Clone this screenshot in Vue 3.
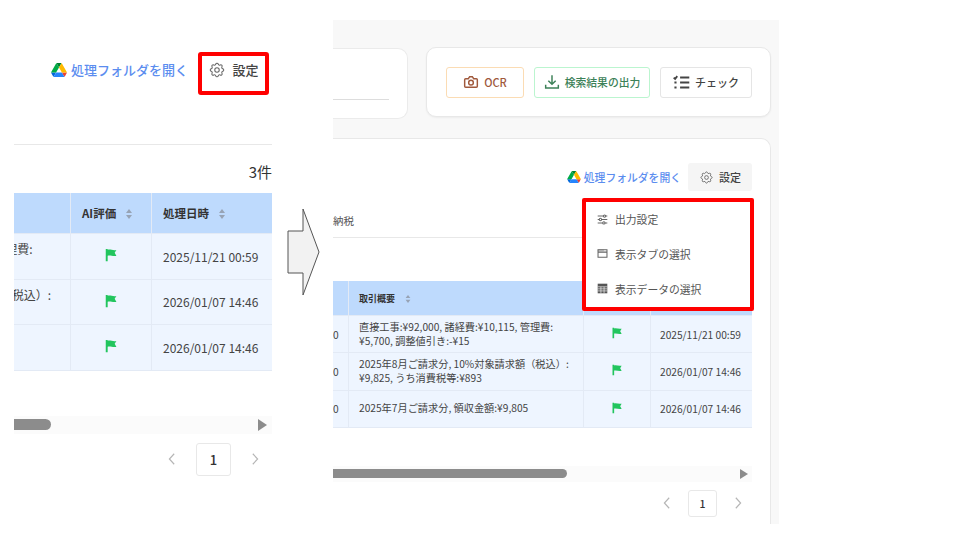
<script setup>
const driveParts = [
  { d: 'm6.6 66.85 3.85 6.65c.8 1.4 1.95 2.5 3.3 3.3l13.75-23.8h-27.5c0 1.55.4 3.1 1.2 4.5z', fill: '#0066da' },
  { d: 'm43.65 25-13.75-23.8c-1.35.8-2.5 1.9-3.3 3.3l-25.4 44a9.06 9.06 0 0 0 -1.2 4.5h27.5z', fill: '#00ac47' },
  { d: 'm73.55 76.8c1.35-.8 2.5-1.9 3.3-3.3l1.6-2.75 7.65-13.25c.8-1.4 1.2-2.95 1.2-4.5h-27.502l5.852 11.5z', fill: '#ea4335' },
  { d: 'm43.65 25 13.75-23.8c-1.35-.8-2.9-1.2-4.5-1.2h-18.5c-1.6 0-3.15.45-4.5 1.2z', fill: '#00832d' },
  { d: 'm59.8 53h-32.3l-13.75 23.8c1.35.8 2.9 1.2 4.5 1.2h50.8c1.6 0 3.15-.45 4.5-1.2z', fill: '#2684fc' },
  { d: 'm73.4 26.5-12.7-22c-.8-1.4-1.95-2.5-3.3-3.3l-13.75 23.8 16.15 28h27.45c0-1.55-.4-3.1-1.2-4.5z', fill: '#ffba00' }
]

const gear = 'M10.325 4.317c.426-1.756 2.924-1.756 3.35 0a1.724 1.724 0 0 0 2.573 1.066c1.543-.94 3.31.826 2.37 2.37a1.724 1.724 0 0 0 1.065 2.572c1.756.426 1.756 2.924 0 3.35a1.724 1.724 0 0 0-1.066 2.573c.94 1.543-.826 3.31-2.37 2.37a1.724 1.724 0 0 0-2.572 1.065c-.426 1.756-2.924 1.756-3.35 0a1.724 1.724 0 0 0-2.573-1.066c-1.543.94-3.31-.826-2.37-2.37a1.724 1.724 0 0 0-1.065-2.572c-1.756-.426-1.756-2.924 0-3.35a1.724 1.724 0 0 0 1.066-2.573c-.94-1.543.826-3.31 2.37-2.37c1 .608 2.296.07 2.572-1.065z'
const flag = 'M2 1h2.200v1c3-1 6 1.200 10 .2l-2 3.300 2 3.500c-4 1-7-1.200-10-.2V15H2z'

const rows = [
  { amount: '0', lines: ['直接工事:¥92,000, 諸経費:¥10,115, 管理費:', '¥5,700, 調整値引き:-¥15'], date: '2025/11/21 00:59' },
  { amount: '0', lines: ['2025年8月ご請求分, 10%対象請求額（税込）:', '¥9,825, うち消費税等:¥893'], date: '2026/01/07 14:46' },
  { amount: '0', lines: ['2025年7月ご請求分, 領収金額:¥9,805'], date: '2026/01/07 14:46' }
]
</script>

<template>
  <div class="canvas">
    <!-- 左: 設定ボタンの拡大 -->
    <section class="zoomed">
      <div class="zoomed-tools">
        <a class="drive-link">
          <svg class="drive" viewBox="0 0 87.3 78"><path v-for="p in driveParts" :key="p.fill" :d="p.d" :fill="p.fill" /></svg>
          処理フォルダを開く
        </a>
        <div class="zoomed-setting">
          <svg class="gear" viewBox="0 0 24 24"><path :d="gear" /><circle cx="12" cy="12" r="3" /></svg>
          設定
        </div>
      </div>
      <div class="zoomed-count">3件</div>
      <div class="ztable">
        <div class="zrow zhead">
          <div class="zcell"></div>
          <div class="zcell">AI評価<span class="sorter"></span></div>
          <div class="zcell">処理日時<span class="sorter"></span></div>
        </div>
        <div v-for="(row, i) in rows" :key="i" class="zrow zbody">
          <div class="zcell zclip">
            <div class="zsummary"><div v-for="line in row.lines" :key="line">{{ line }}</div></div>
          </div>
          <div class="zcell zflag"><svg viewBox="0 0 16 16"><path :d="flag" /></svg></div>
          <div class="zcell">{{ row.date }}</div>
        </div>
      </div>
      <div class="zscroll">
        <div class="zthumb"></div>
        <div class="arrow-r"></div>
      </div>
      <div class="zpager">
        <svg class="chev" viewBox="0 0 10 16"><path d="M7.500 2 2 8l5.500 6" /></svg>
        <div class="zpage">1</div>
        <svg class="chev" viewBox="0 0 10 16"><path d="M2.500 2 8 8l-5.500 6" /></svg>
      </div>
    </section>

    <svg class="big-arrow" viewBox="0 0 34 90">
      <path d="M1 23h15V1l16 43-16 43V65H1z" />
    </svg>

    <!-- 右: 画面全体 -->
    <section class="screen">
      <div class="top-row">
        <div class="search-card"><div class="search-line"></div></div>
        <div class="action-card">
          <button class="btn btn-ocr">
            <svg viewBox="0 0 24 24"><path d="M4 7h4l2-3h4l2 3h4a1.500 1.500 0 0 1 1.500 1.500v10A1.500 1.500 0 0 1 20 20H4a1.500 1.500 0 0 1-1.500-1.500v-10A1.500 1.500 0 0 1 4 7z" /><circle cx="12" cy="13" r="3.500" /></svg>
            OCR
          </button>
          <button class="btn btn-export">
            <svg viewBox="0 0 24 24"><path d="M12 2v13M6.500 10l5.500 5.500 5.500-5.500M2.500 16v5h19v-5" /></svg>
            検索結果の出力
          </button>
          <button class="btn btn-check">
            <svg viewBox="0 0 24 24"><path d="M10 5h13M10 12h13M10 19h13M1 5l2 2 3-4M2 12h3M2 19h3" /></svg>
            チェック
          </button>
        </div>
      </div>

      <div class="result-card">
        <div class="result-tools">
          <a class="drive-link small">
            <svg class="drive" viewBox="0 0 87.3 78"><path v-for="p in driveParts" :key="p.fill" :d="p.d" :fill="p.fill" /></svg>
            処理フォルダを開く
          </a>
          <div class="setting-btn">
            <svg class="gear" viewBox="0 0 24 24"><path :d="gear" /><circle cx="12" cy="12" r="3" /></svg>
            設定
          </div>
        </div>
        <div class="tabs"><span>納税</span></div>
        <div class="rtable">
          <div class="rrow rhead">
            <div class="rcell"></div>
            <div class="rcell">取引概要<span class="sorter"></span></div>
            <div class="rcell">AI評価</div>
            <div class="rcell">処理日時</div>
          </div>
          <div v-for="(row, i) in rows" :key="i" class="rrow rbody">
            <div class="rcell ramount">{{ row.amount }}</div>
            <div class="rcell rsummary"><div v-for="line in row.lines" :key="line">{{ line }}</div></div>
            <div class="rcell rflag"><svg viewBox="0 0 16 16"><path :d="flag" /></svg></div>
            <div class="rcell rdate">{{ row.date }}</div>
          </div>
        </div>
        <div class="rscroll">
          <div class="rthumb"></div>
          <div class="arrow-r"></div>
        </div>
        <div class="rpager">
          <svg class="chev" viewBox="0 0 10 16"><path d="M7.500 2 2 8l5.500 6" /></svg>
          <div class="rpage">1</div>
          <svg class="chev" viewBox="0 0 10 16"><path d="M2.500 2 8 8l-5.500 6" /></svg>
        </div>

        <div class="menu">
          <div class="menu-item">
            <svg viewBox="0 0 16 16"><path d="M1 3h14M1 8h14M1 13h14" /><circle class="knob" cx="11" cy="3" r="1.700" /><circle class="knob" cx="5" cy="8" r="1.700" /><circle class="knob" cx="10" cy="13" r="1.700" /></svg>
            出力設定
          </div>
          <div class="menu-item">
            <svg viewBox="0 0 16 16"><path class="tab-top" d="M1 2h9v3H1z" /><path d="M1.500 2.500h13v11h-13zM1.500 6h13" /></svg>
            表示タブの選択
          </div>
          <div class="menu-item">
            <svg viewBox="0 0 16 16"><path class="solid" d="M1 1h14v14H1z" /><path class="grid" d="M1 5.500h14M1 8.500h14M1 11.500h14M5.700 5.500V15M10.300 5.500V15" /></svg>
            表示データの選択
          </div>
        </div>
      </div>
    </section>
  </div>
</template>

<style>
html, body { margin: 0; background: #fff; }
</style>

<style scoped>
.canvas {
  position: relative;
  width: 974px;
  height: 534px;
  overflow: hidden;
  background: #fff;
  color: #333;
  font-family: "Noto Sans CJK JP", "Noto Sans", sans-serif;
}

/* 左パネル */
.zoomed {
  position: absolute;
  left: 14px;
  top: 40px;
  width: 258px;
  height: 450px;
  padding-top: 12px;
  box-sizing: border-box;
}
.zoomed-tools {
  display: flex;
  justify-content: flex-end;
  align-items: flex-start;
  gap: 10px;
  padding-right: 3px;
  padding-bottom: 49px;
  border-bottom: 1px solid #e8e8e8;
}
.drive-link {
  display: flex;
  align-items: center;
  gap: 4px;
  color: #5b8def;
  font-size: 13px;
  font-weight: 500;
  white-space: nowrap;
}
.zoomed-tools .drive-link { margin-top: 8px; }
.drive { width: 16px; height: 14px; }
.zoomed-setting {
  box-sizing: border-box;
  width: 71px;
  height: 43px;
  border: 4px solid #f00;
  border-radius: 3px;
  padding-bottom: 8px;
  display: flex;
  align-items: center;
  justify-content: center;
  gap: 6px;
  font-size: 13px;
  font-weight: 500;
  color: #444;
}
.gear { width: 18px; height: 18px; fill: none; stroke: #666; stroke-width: 1.400; }
.zoomed-count {
  height: 48px;
  padding-top: 16px;
  box-sizing: border-box;
  text-align: right;
  font-size: 15px;
  line-height: 22px;
}
.zrow {
  display: grid;
  grid-template-columns: 56px 81px 121px;
}
.zhead {
  height: 41px;
  background: #bedafd;
  font-size: 11.5px;
  font-weight: 700;
}
.zbody {
  height: 45.500px;
  background: #eef5ff;
  font-size: 12px;
  color: #444;
}
.zcell {
  display: flex;
  align-items: center;
  padding-left: 11px;
  border-left: 1px solid #e3eaf5;
  border-bottom: 1px solid #e3eaf5;
  white-space: nowrap;
}
.zcell:first-child { padding-left: 0; border-left: 0; }
.zclip { overflow: hidden; }
.zsummary {
  margin-left: -210px;
  line-height: 20px;
  margin-top: 6px;
  flex: none;
  width: 260px;
}
.zflag { padding-left: 0; justify-content: center; }
.zflag svg { width: 14px; height: 14px; fill: #22c55e; margin-bottom: 2px; }
.sorter {
  display: inline-block;
  margin-left: 13px;
  width: 0;
  height: 5px;
  position: relative;
}
.sorter::before, .sorter::after {
  content: "";
  position: absolute;
  left: -3px;
  width: 0;
  border-left: 3.500px solid transparent;
  border-right: 3.500px solid transparent;
}
.sorter::before { top: -2px; border-bottom: 4px solid #97a3b5; }
.sorter::after { top: 4px; border-top: 4px solid #97a3b5; }
.zscroll {
  margin-top: 45px;
  height: 18px;
  background: #fbfbfb;
  display: flex;
  align-items: center;
  justify-content: space-between;
  padding-right: 5px;
}
.zthumb { width: 37px; height: 11px; background: #8c8c8c; border-radius: 0 6px 6px 0; }
.arrow-r {
  width: 0;
  height: 0;
  border-left: 9px solid #8c8c8c;
  border-top: 6px solid transparent;
  border-bottom: 6px solid transparent;
}
.zpager {
  display: flex;
  align-items: center;
  justify-content: flex-end;
  margin-top: 9px;
  gap: 19px;
  padding-right: 12px;
}
.chev { width: 10px; height: 14px; fill: none; stroke: #b5b5b5; stroke-width: 1.300; }
.zpage {
  box-sizing: border-box;
  width: 35px;
  height: 33px;
  display: flex;
  align-items: center;
  justify-content: center;
  border: 1px solid #e8e8e8;
  border-radius: 3px;
  font-size: 13px;
  font-weight: 500;
}

.big-arrow {
  position: absolute;
  left: 287px;
  top: 208px;
  width: 34px;
  height: 90px;
  fill: #f2f2f2;
  stroke: #555;
  stroke-width: 1;
}

/* 右パネル */
.screen {
  position: absolute;
  left: 333px;
  top: 20px;
  width: 446px;
  height: 504px;
  padding: 27px 8px 0 0;
  box-sizing: border-box;
  background: #f8f8f8;
  overflow: hidden;
}
.top-row {
  display: flex;
  gap: 18px;
  align-items: flex-start;
}
.search-card {
  box-sizing: border-box;
  width: 75px;
  height: 71px;
  margin-top: 1px;
  padding-top: 50px;
  background: #fff;
  border: 1px solid #ebebeb;
  border-left: 0;
  border-radius: 0 10px 10px 0;
}
.search-line { width: 56px; border-top: 1px solid #ddd; }
.action-card {
  box-sizing: border-box;
  width: 345px;
  height: 70px;
  display: flex;
  align-items: center;
  gap: 10px;
  padding: 0 0 0 19px;
  background: #fff;
  border: 1px solid #e8e8e8;
  border-radius: 10px;
  box-shadow: 0 1px 2px rgba(0, 0, 0, 0.05);
}
.btn {
  flex: none;
  box-sizing: border-box;
  height: 31px;
  display: flex;
  align-items: center;
  justify-content: center;
  gap: 5px;
  padding: 0;
  background: #fff;
  border: 1px solid #e5e5e5;
  border-radius: 3px;
  font-family: inherit;
  font-size: 10.800px;
  font-weight: 500;
  white-space: nowrap;
}
.btn svg { width: 16px; height: 16px; fill: none; stroke: currentColor; stroke-width: 2.200; }
.btn-ocr { width: 78px; color: #a0593c; border-color: #fbdcb4; font-size: 11px; }
.btn-export { width: 116px; color: #3c8158; border-color: #bbf5cf; }
.btn-check { width: 92px; color: #444; font-size: 11px; }
.btn-check svg { width: 17px; height: 17px; stroke-width: 2.600; }
.result-card {
  position: relative;
  box-sizing: border-box;
  width: 438px;
  height: 400px;
  margin-top: 19px;
  padding: 24px 18px 0 0;
  background: #fff;
  border: 1px solid #e8e8e8;
  border-left: 0;
  border-radius: 0 10px 0 0;
}
.result-tools {
  display: flex;
  justify-content: flex-end;
  align-items: center;
  gap: 7px;
}
.drive-link.small { font-size: 10.800px; gap: 3px; }
.drive-link.small .drive { width: 14px; height: 12px; }
.setting-btn {
  width: 64px;
  height: 28px;
  display: flex;
  align-items: center;
  justify-content: center;
  gap: 5px;
  background: #f5f5f5;
  border-radius: 3px;
  font-size: 11px;
  font-weight: 500;
  color: #444;
}
.setting-btn .gear { width: 15px; height: 15px; }
.tabs {
  height: 47px;
  padding-top: 22px;
  box-sizing: border-box;
  border-bottom: 1px solid #e8e8e8;
  font-size: 10.500px;
  line-height: 16px;
  color: #555;
}
.rtable { margin-top: 43px; }
.rrow {
  display: grid;
  grid-template-columns: 15px 235px 67px 102px;
}
.rhead {
  height: 35px;
  background: #bedafd;
  font-size: 9px;
  font-weight: 700;
}
.rhead .sorter { margin-left: 13px; transform: scale(0.8); }
.rbody {
  height: 37.300px;
  background: #eef5ff;
  font-size: 10.200px;
  color: #444;
}
.rcell {
  display: flex;
  align-items: center;
  padding-left: 10px;
  border-left: 1px solid #e3eaf5;
  border-bottom: 1px solid #e3eaf5;
  white-space: nowrap;
}
.rcell:first-child { padding-left: 0; border-left: 0; }
.rsummary {
  flex-direction: column;
  align-items: flex-start;
  justify-content: center;
  line-height: 14.500px;
}
.rflag { padding-left: 0; justify-content: center; }
.rflag svg { width: 12px; height: 12px; fill: #22c55e; margin-bottom: 2px; }
.rdate { padding-left: 9px; }
.rscroll {
  margin-top: 38px;
  height: 16px;
  background: #fbfbfb;
  display: flex;
  align-items: center;
  justify-content: space-between;
  padding-right: 4px;
}
.rthumb { width: 234px; height: 9px; background: #8c8c8c; border-radius: 0 5px 5px 0; }
.rscroll .arrow-r { border-left-width: 8px; border-top-width: 5px; border-bottom-width: 5px; }
.rpager {
  display: flex;
  align-items: center;
  justify-content: flex-end;
  margin-top: 8px;
  gap: 16px;
  padding-right: 9px;
}
.rpage {
  box-sizing: border-box;
  width: 29px;
  height: 27px;
  display: flex;
  align-items: center;
  justify-content: center;
  border: 1px solid #e8e8e8;
  border-radius: 3px;
  font-size: 10.500px;
  font-weight: 500;
}

.menu {
  position: absolute;
  left: 249px;
  top: 59px;
  box-sizing: border-box;
  width: 172px;
  height: 113px;
  padding: 0 11px 1px;
  display: flex;
  flex-direction: column;
  justify-content: space-around;
  background: #fff;
  border: 4px solid #f00;
  border-radius: 2px;
}
.menu-item {
  display: flex;
  align-items: center;
  gap: 7px;
  font-size: 10.800px;
  color: #555;
}
.menu-item svg { width: 11px; height: 11px; fill: none; stroke: #666; stroke-width: 1.500; }
.menu-item .knob { fill: #fff; }
.menu-item .tab-top { fill: #ccc; stroke: none; }
.menu-item .solid { fill: #555; stroke: none; }
.menu-item .grid { stroke: #fff; stroke-width: 0.900; }
</style>
